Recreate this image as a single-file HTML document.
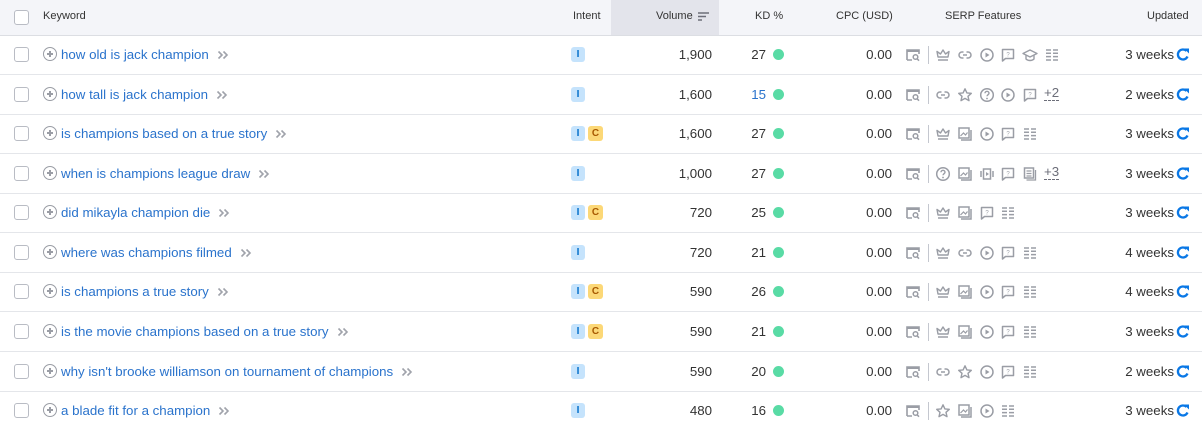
<!DOCTYPE html>
<html><head><meta charset="utf-8"><style>
*{margin:0;padding:0;box-sizing:border-box}
body{width:1202px;height:427px;overflow:hidden;background:#fff;font-family:"Liberation Sans",sans-serif;position:relative}
.hdr{position:absolute;left:0;top:0;width:1202px;height:36px;background:#f4f5f9;border-bottom:1px solid #dcdee3;font-size:11px;color:#333}
.hdr span{position:absolute;top:10px}
.volh{position:absolute;left:611px;top:0;width:108px;height:35px;background:#e3e4eb}
.cb{position:absolute;left:14px;width:15px;height:15px;border:1px solid #b9bcc4;border-radius:3px;background:#fff}
.row{position:absolute;left:0;width:1202px;height:40px;border-bottom:1px solid #e4e6ea;font-size:13.3px;color:#333}
.row>*{position:absolute}
.plus{left:43px;top:12px;width:14px;height:14px;border:1.5px solid #9a9da5;border-radius:50%}
.plus:before{content:"";position:absolute;left:2.5px;top:5px;width:6px;height:1.5px;background:#9a9da5}
.plus:after{content:"";position:absolute;left:5px;top:2.5px;width:1.5px;height:6px;background:#9a9da5}
.kw{left:61px;top:12px;color:#2a73cc;white-space:nowrap}
.kw svg{margin-left:8px;vertical-align:-1px}
.bi{top:12px;width:14px;height:15px;border-radius:3px;background:#c5e3fc;color:#006dca;font-size:10px;font-weight:bold;text-align:center;line-height:15px}
.bc{top:12px;width:15px;height:15px;border-radius:3px;background:#fcd877;color:#a75800;font-size:10px;font-weight:bold;text-align:center;line-height:15px}
.vol{right:490px;top:12px}
.kd{right:436px;top:12px}
.dot{left:773px;top:14px;width:11px;height:11px;border-radius:50%;background:#59dba5}
.cpc{right:310px;top:12px}
.sep{left:928px;top:11px;width:1px;height:18px;background:#c4c7cf}
.ic{top:12px;width:16px;height:16px}
.more{top:11px;color:#6c6e79;border-bottom:1px dashed #6c6e79;line-height:14px}
.upd{right:28px;top:12px}
.ref{left:1176px;top:12px;width:14px;height:15px}
</style></head><body>
<svg width="0" height="0" style="position:absolute">
<defs>
<symbol id="chev" viewBox="0 0 12 10"><path d="M1.5 1.5L5 5 1.5 8.5M6.5 1.5L10 5 6.5 8.5" fill="none" stroke="#a0a3ab" stroke-width="1.6"/></symbol>
<symbol id="srch" viewBox="0 0 16 16"><path d="M2 13V3h12v4M2 13h5" fill="none" stroke="#9a9da5" stroke-width="1.6"/><path d="M2 3h12v2H2z" fill="#9a9da5"/><circle cx="10.5" cy="10" r="2.3" fill="none" stroke="#9a9da5" stroke-width="1.5"/><path d="M12 11.7l2 2" stroke="#9a9da5" stroke-width="1.5"/></symbol>
<symbol id="crown" viewBox="0 0 16 16"><path d="M3 10L2 4.5 5.5 7 8 3l2.5 4L14 4.5 13 10z" fill="none" stroke="#9a9da5" stroke-width="1.4" stroke-linejoin="round"/><path d="M3 13h10" stroke="#9a9da5" stroke-width="1.5"/></symbol>
<symbol id="link" viewBox="0 0 16 16"><path d="M6.5 5H5a3 3 0 000 6h1.5M9.5 5H11a3 3 0 010 6H9.5M6 8h4" fill="none" stroke="#9a9da5" stroke-width="1.5"/></symbol>
<symbol id="play" viewBox="0 0 16 16"><circle cx="8" cy="8" r="6" fill="none" stroke="#9a9da5" stroke-width="1.5"/><path d="M6.5 5.5v5l4-2.5z" fill="#9a9da5"/></symbol>
<symbol id="chat" viewBox="0 0 16 16"><path d="M2.5 14V2.5h11v9h-8z" fill="none" stroke="#9a9da5" stroke-width="1.5" stroke-linejoin="round"/><text x="8" y="9.5" font-size="6" text-anchor="middle" fill="#9a9da5" font-family="Liberation Sans">?</text></symbol>
<symbol id="grad" viewBox="0 0 16 16"><path d="M1 6.5L8 3l7 3.5L8 10z" fill="none" stroke="#9a9da5" stroke-width="1.4" stroke-linejoin="round"/><path d="M4 8.5V12c2 2 6 2 8 0V8.5" fill="none" stroke="#9a9da5" stroke-width="1.4"/></symbol>
<symbol id="list" viewBox="0 0 16 16"><path d="M2 3h5M9 3h5M2 6.3h5M9 6.3h5M2 9.6h5M9 9.6h5M2 13h5M9 13h5" stroke="#9a9da5" stroke-width="1.5"/></symbol>
<symbol id="star" viewBox="0 0 16 16"><path d="M8 1.8l1.9 4.1 4.4.4-3.3 3 1 4.4L8 11.4l-4 2.3 1-4.4-3.3-3 4.4-.4z" fill="none" stroke="#9a9da5" stroke-width="1.4" stroke-linejoin="round"/></symbol>
<symbol id="q" viewBox="0 0 16 16"><circle cx="8" cy="8" r="6.3" fill="none" stroke="#9a9da5" stroke-width="1.5"/><path d="M6 6.3a2 2 0 114 0c0 1.3-2 1.5-2 3" fill="none" stroke="#9a9da5" stroke-width="1.4"/><circle cx="8" cy="11.5" r=".9" fill="#9a9da5"/></symbol>
<symbol id="img" viewBox="0 0 16 16"><path d="M2 2h10v10H2z" fill="none" stroke="#9a9da5" stroke-width="1.5"/><path d="M14 4v10H4" fill="none" stroke="#9a9da5" stroke-width="1.5"/><path d="M3.5 10l3-3 2 2 2-2.5" fill="none" stroke="#9a9da5" stroke-width="1.2"/></symbol>
<symbol id="vid" viewBox="0 0 16 16"><path d="M4.5 3h7v10h-7z" fill="none" stroke="#9a9da5" stroke-width="1.5"/><path d="M2 5v6M14 5v6" stroke="#9a9da5" stroke-width="1.5"/><path d="M7 6v4l3-2z" fill="#9a9da5"/></symbol>
<symbol id="doc" viewBox="0 0 16 16"><path d="M2.5 2h9v10h-9z" fill="none" stroke="#9a9da5" stroke-width="1.5"/><path d="M13.5 4v10h-9M4.5 5h5M4.5 7.5h5M4.5 10h5" fill="none" stroke="#9a9da5" stroke-width="1.3"/></symbol>
<symbol id="ref" viewBox="0 0 14 15"><path d="M11.5 9.5A5 5 0 1 1 10.5 4" fill="none" stroke="#0a78e6" stroke-width="2.3"/><path d="M8 1.5h5v5z" fill="#0a78e6"/></symbol>
</defs></svg>

<div class="hdr"><div class="volh"></div>
<div class="cb" style="top:10px"></div>
<span style="left:43px">Keyword</span>
<span style="left:573px">Intent</span>
<span style="left:656px">Volume</span>
<svg style="position:absolute;left:698px;top:12px" width="12" height="10"><path d="M0 1h11M0 4.5h8M0 8h4" stroke="#6c6e79" stroke-width="1.5"/></svg>
<span style="left:755px">KD %</span>
<span style="left:836px">CPC (USD)</span>
<span style="left:945px">SERP Features</span>
<span style="left:1147px">Updated</span>
</div>

<div class="row" style="top:35px"><div class="cb" style="top:12px"></div><div class="plus"></div><div class="kw">how old is jack champion<svg width="12" height="10"><use href="#chev"/></svg></div><div class="bi" style="left:571px">I</div><div class="vol">1,900</div><div class="kd">27</div><div class="dot"></div><div class="cpc">0.00</div>
<svg class="ic" style="left:905px"><use href="#srch"/></svg><div class="sep"></div>
<svg class="ic" style="left:935px"><use href="#crown"/></svg><svg class="ic" style="left:957px"><use href="#link"/></svg><svg class="ic" style="left:979px"><use href="#play"/></svg><svg class="ic" style="left:1000px"><use href="#chat"/></svg><svg class="ic" style="left:1022px"><use href="#grad"/></svg><svg class="ic" style="left:1044px"><use href="#list"/></svg>
<div class="upd">3 weeks</div><svg class="ref"><use href="#ref"/></svg></div>

<div class="row" style="top:75px"><div class="cb" style="top:12px"></div><div class="plus"></div><div class="kw">how tall is jack champion<svg width="12" height="10"><use href="#chev"/></svg></div><div class="bi" style="left:571px">I</div><div class="vol">1,600</div><div class="kd" style="color:#2a73cc">15</div><div class="dot"></div><div class="cpc">0.00</div>
<svg class="ic" style="left:905px"><use href="#srch"/></svg><div class="sep"></div>
<svg class="ic" style="left:935px"><use href="#link"/></svg><svg class="ic" style="left:957px"><use href="#star"/></svg><svg class="ic" style="left:979px"><use href="#q"/></svg><svg class="ic" style="left:1000px"><use href="#play"/></svg><svg class="ic" style="left:1022px"><use href="#chat"/></svg><div class="more" style="left:1044px">+2</div>
<div class="upd">2 weeks</div><svg class="ref"><use href="#ref"/></svg></div>

<div class="row" style="top:114px"><div class="cb" style="top:12px"></div><div class="plus"></div><div class="kw">is champions based on a true story<svg width="12" height="10"><use href="#chev"/></svg></div><div class="bi" style="left:571px">I</div><div class="bc" style="left:588px">C</div><div class="vol">1,600</div><div class="kd">27</div><div class="dot"></div><div class="cpc">0.00</div>
<svg class="ic" style="left:905px"><use href="#srch"/></svg><div class="sep"></div>
<svg class="ic" style="left:935px"><use href="#crown"/></svg><svg class="ic" style="left:957px"><use href="#img"/></svg><svg class="ic" style="left:979px"><use href="#play"/></svg><svg class="ic" style="left:1000px"><use href="#chat"/></svg><svg class="ic" style="left:1022px"><use href="#list"/></svg>
<div class="upd">3 weeks</div><svg class="ref"><use href="#ref"/></svg></div>

<div class="row" style="top:154px"><div class="cb" style="top:12px"></div><div class="plus"></div><div class="kw">when is champions league draw<svg width="12" height="10"><use href="#chev"/></svg></div><div class="bi" style="left:571px">I</div><div class="vol">1,000</div><div class="kd">27</div><div class="dot"></div><div class="cpc">0.00</div>
<svg class="ic" style="left:905px"><use href="#srch"/></svg><div class="sep"></div>
<svg class="ic" style="left:935px"><use href="#q"/></svg><svg class="ic" style="left:957px"><use href="#img"/></svg><svg class="ic" style="left:979px"><use href="#vid"/></svg><svg class="ic" style="left:1000px"><use href="#chat"/></svg><svg class="ic" style="left:1022px"><use href="#doc"/></svg><div class="more" style="left:1044px">+3</div>
<div class="upd">3 weeks</div><svg class="ref"><use href="#ref"/></svg></div>

<div class="row" style="top:193px"><div class="cb" style="top:12px"></div><div class="plus"></div><div class="kw">did mikayla champion die<svg width="12" height="10"><use href="#chev"/></svg></div><div class="bi" style="left:571px">I</div><div class="bc" style="left:588px">C</div><div class="vol">720</div><div class="kd">25</div><div class="dot"></div><div class="cpc">0.00</div>
<svg class="ic" style="left:905px"><use href="#srch"/></svg><div class="sep"></div>
<svg class="ic" style="left:935px"><use href="#crown"/></svg><svg class="ic" style="left:957px"><use href="#img"/></svg><svg class="ic" style="left:979px"><use href="#chat"/></svg><svg class="ic" style="left:1000px"><use href="#list"/></svg>
<div class="upd">3 weeks</div><svg class="ref"><use href="#ref"/></svg></div>

<div class="row" style="top:233px"><div class="cb" style="top:12px"></div><div class="plus"></div><div class="kw">where was champions filmed<svg width="12" height="10"><use href="#chev"/></svg></div><div class="bi" style="left:571px">I</div><div class="vol">720</div><div class="kd">21</div><div class="dot"></div><div class="cpc">0.00</div>
<svg class="ic" style="left:905px"><use href="#srch"/></svg><div class="sep"></div>
<svg class="ic" style="left:935px"><use href="#crown"/></svg><svg class="ic" style="left:957px"><use href="#link"/></svg><svg class="ic" style="left:979px"><use href="#play"/></svg><svg class="ic" style="left:1000px"><use href="#chat"/></svg><svg class="ic" style="left:1022px"><use href="#list"/></svg>
<div class="upd">4 weeks</div><svg class="ref"><use href="#ref"/></svg></div>

<div class="row" style="top:272px"><div class="cb" style="top:12px"></div><div class="plus"></div><div class="kw">is champions a true story<svg width="12" height="10"><use href="#chev"/></svg></div><div class="bi" style="left:571px">I</div><div class="bc" style="left:588px">C</div><div class="vol">590</div><div class="kd">26</div><div class="dot"></div><div class="cpc">0.00</div>
<svg class="ic" style="left:905px"><use href="#srch"/></svg><div class="sep"></div>
<svg class="ic" style="left:935px"><use href="#crown"/></svg><svg class="ic" style="left:957px"><use href="#img"/></svg><svg class="ic" style="left:979px"><use href="#play"/></svg><svg class="ic" style="left:1000px"><use href="#chat"/></svg><svg class="ic" style="left:1022px"><use href="#list"/></svg>
<div class="upd">4 weeks</div><svg class="ref"><use href="#ref"/></svg></div>

<div class="row" style="top:312px"><div class="cb" style="top:12px"></div><div class="plus"></div><div class="kw">is the movie champions based on a true story<svg width="12" height="10"><use href="#chev"/></svg></div><div class="bi" style="left:571px">I</div><div class="bc" style="left:588px">C</div><div class="vol">590</div><div class="kd">21</div><div class="dot"></div><div class="cpc">0.00</div>
<svg class="ic" style="left:905px"><use href="#srch"/></svg><div class="sep"></div>
<svg class="ic" style="left:935px"><use href="#crown"/></svg><svg class="ic" style="left:957px"><use href="#img"/></svg><svg class="ic" style="left:979px"><use href="#play"/></svg><svg class="ic" style="left:1000px"><use href="#chat"/></svg><svg class="ic" style="left:1022px"><use href="#list"/></svg>
<div class="upd">3 weeks</div><svg class="ref"><use href="#ref"/></svg></div>

<div class="row" style="top:352px"><div class="cb" style="top:12px"></div><div class="plus"></div><div class="kw">why isn't brooke williamson on tournament of champions<svg width="12" height="10"><use href="#chev"/></svg></div><div class="bi" style="left:571px">I</div><div class="vol">590</div><div class="kd">20</div><div class="dot"></div><div class="cpc">0.00</div>
<svg class="ic" style="left:905px"><use href="#srch"/></svg><div class="sep"></div>
<svg class="ic" style="left:935px"><use href="#link"/></svg><svg class="ic" style="left:957px"><use href="#star"/></svg><svg class="ic" style="left:979px"><use href="#play"/></svg><svg class="ic" style="left:1000px"><use href="#chat"/></svg><svg class="ic" style="left:1022px"><use href="#list"/></svg>
<div class="upd">2 weeks</div><svg class="ref"><use href="#ref"/></svg></div>

<div class="row" style="top:391px;border-bottom:none"><div class="cb" style="top:12px"></div><div class="plus"></div><div class="kw">a blade fit for a champion<svg width="12" height="10"><use href="#chev"/></svg></div><div class="bi" style="left:571px">I</div><div class="vol">480</div><div class="kd">16</div><div class="dot"></div><div class="cpc">0.00</div>
<svg class="ic" style="left:905px"><use href="#srch"/></svg><div class="sep"></div>
<svg class="ic" style="left:935px"><use href="#star"/></svg><svg class="ic" style="left:957px"><use href="#img"/></svg><svg class="ic" style="left:979px"><use href="#play"/></svg><svg class="ic" style="left:1000px"><use href="#list"/></svg>
<div class="upd">3 weeks</div><svg class="ref"><use href="#ref"/></svg></div>
</body></html>
